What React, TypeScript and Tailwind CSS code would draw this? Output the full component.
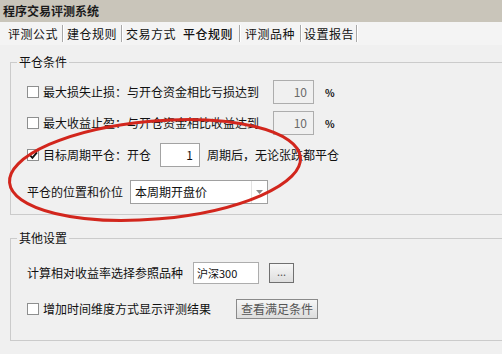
import React from "react";

const font = { fontFamily: '"Noto Sans CJK SC", "Noto Sans", sans-serif' };

function Check({ checked = false }: { checked?: boolean }) {
  return (
    <span className="flex h-[12px] w-[12px] shrink-0 items-center justify-center border border-[#8e8f8f] bg-white">
      {checked && (
        <svg width="9" height="9" viewBox="0 0 9 9">
          <path d="M1 4.2 L3.4 6.8 L8 1.4" fill="none" stroke="#111" strokeWidth="1.8" />
        </svg>
      )}
    </span>
  );
}

function Sep() {
  return <span className="block h-[17px] w-px shrink-0 bg-[#a8a8a8] shadow-[1px_0_0_#ffffff]" />;
}

function Group({
  title,
  className,
  children,
}: {
  title: string;
  className: string;
  children: React.ReactNode;
}) {
  return (
    <div className={`relative ml-[10px] border-y border-l border-[#cbcbcb] ${className}`}>
      <span className="absolute -top-[9px] left-[6px] bg-[#f0f0f0] px-[2px] text-[12px] leading-[16px] text-[#111]">
        {title}
      </span>
      {children}
    </div>
  );
}

export default function App() {
  return (
    <div
      className="relative h-[354px] w-[502px] overflow-hidden bg-[#f0f0f0] text-[12px] text-[#111]"
      style={font}
    >
      {/* title bar */}
      <div className="flex h-[22px] items-center bg-[#c9c5ba] pl-[3px] text-[12px] font-bold text-[#1a1a1a]">
        程序交易评测系统
      </div>

      {/* tabs */}
      <div className="flex h-[23px] items-center bg-[#f4f4f4] pl-[8px] text-[12px] tracking-[0.5px]">
        <span className="w-[50px]">评测公式</span>
        <span className="ml-[4px]"><Sep /></span>
        <span className="ml-[4px] w-[51px]">建仓规则</span>
        <span className="ml-[3px]"><Sep /></span>
        <span className="ml-[4px] w-[51px]">交易方式</span>
        <span className="ml-[6px] w-[51px] font-medium">平仓规则</span>
        <span className="ml-[5px]"><Sep /></span>
        <span className="ml-[5px] w-[53px]">评测品种</span>
        <span className="ml-[2px]"><Sep /></span>
        <span className="ml-[3px] w-[51px]">设置报告</span>
        <span className="ml-[1px]"><Sep /></span>
      </div>

      {/* 平仓条件 */}
      <Group title="平仓条件" className="mt-[17px] h-[153px] pl-[16px] pt-[17px]">
        <div className="flex h-[24px] items-center">
          <Check />
          <span className="ml-[4px] w-[230px]">最大损失止损：与开仓资金相比亏损达到</span>
          <span className="flex h-[24px] w-[41px] items-center justify-end border border-[#adadad] bg-[#f0f0f0] pr-[6px] text-[#6a6a6a]">
            10
          </span>
          <span className="ml-[11px] text-[10px] font-bold">%</span>
        </div>
        <div className="mt-[7px] flex h-[24px] items-center">
          <Check />
          <span className="ml-[4px] w-[230px]">最大收益止盈：与开仓资金相比收益达到</span>
          <span className="flex h-[24px] w-[41px] items-center justify-end border border-[#adadad] bg-[#f0f0f0] pr-[6px] text-[#6a6a6a]">
            10
          </span>
          <span className="ml-[11px] text-[10px] font-bold">%</span>
        </div>
        <div className="mt-[8px] flex h-[24px] items-center">
          <Check checked />
          <span className="ml-[4px] w-[117px]">目标周期平仓：开仓</span>
          <span className="flex h-[24px] w-[40px] items-center justify-end border border-[#a3a3a3] bg-white pr-[6px]">
            1
          </span>
          <span className="ml-[7px]">周期后，无论张跌都平仓</span>
        </div>
        <div className="mt-[13px] flex h-[24px] items-center">
          <span className="w-[103px]">平仓的位置和价位</span>
          <span className="flex h-[24px] w-[138px] items-center border border-[#a0a0a0] bg-white">
            <span className="flex-1 pl-[4px]">本周期开盘价</span>
            <span className="flex h-full w-[16px] items-center justify-center border-l border-[#e2e2e2]">
              <svg width="7" height="4" viewBox="0 0 7 4">
                <path d="M0 0 L7 0 L3.5 4 Z" fill="#8a8a8a" />
              </svg>
            </span>
          </span>
        </div>
      </Group>

      {/* 其他设置 */}
      <Group title="其他设置" className="mt-[23px] h-[103px] pl-[16px] pt-[23px]">
        <div className="flex h-[22px] items-center">
          <span className="w-[166px]">计算相对收益率选择参照品种</span>
          <span className="flex h-[22px] w-[66px] items-center border border-[#adadad] bg-white pl-[3px] text-[11px]">
            沪深300
          </span>
          <span className="ml-[10px] flex h-[20px] w-[25px] items-center justify-center border border-[#707070] bg-gradient-to-b from-[#f7f7f7] to-[#dedede] pb-[4px] text-[11px] text-[#555]">
            ...
          </span>
        </div>
        <div className="mt-[14px] flex h-[22px] items-center">
          <Check />
          <span className="ml-[4px] w-[193px]">增加时间维度方式显示评测结果</span>
          <span className="flex h-[20px] w-[82px] items-center justify-center border border-[#8a8a8a] bg-gradient-to-b from-[#f6f6f6] to-[#dddddd] text-[#555]">
            查看满足条件
          </span>
        </div>
      </Group>

      {/* red hand-drawn ellipse */}
      <svg
        className="pointer-events-none absolute left-0 top-0"
        width="502"
        height="354"
        viewBox="0 0 502 354"
      >
        <ellipse
          cx="155"
          cy="170"
          rx="146"
          ry="49"
          transform="rotate(-5 155 170)"
          fill="none"
          stroke="#d2261d"
          strokeWidth="3"
        />
      </svg>
    </div>
  );
}
